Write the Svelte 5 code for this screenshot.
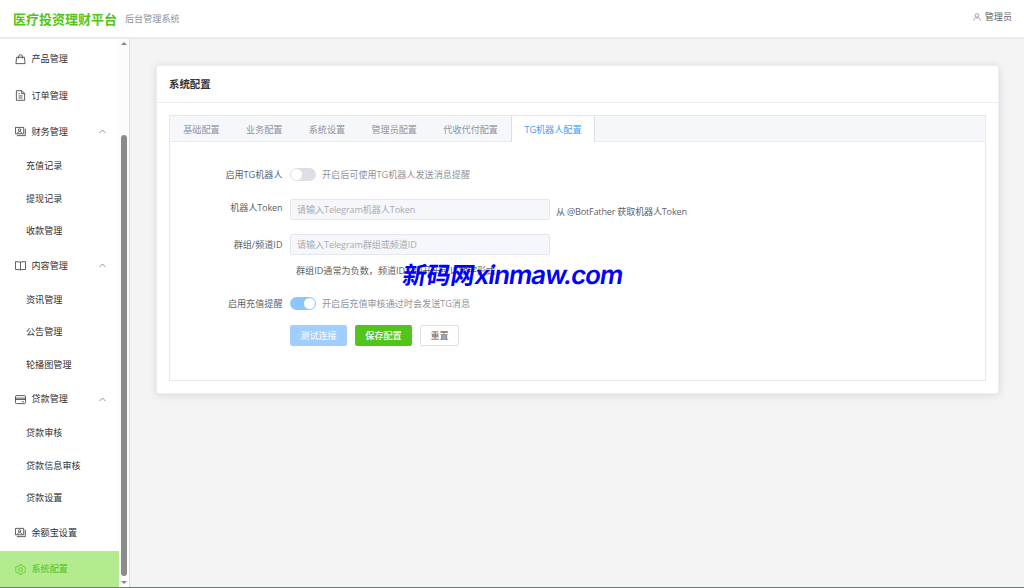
<script>
  let activeTab = $state('TG机器人配置');
  let chatToken = $state('');
  let chatId = $state('');
  let botEnabled = $state(false);
  let rechargeNotice = $state(true);

  const tabs = ['基础配置', '业务配置', '系统设置', '管理员配置', '代收代付配置', 'TG机器人配置'];

  const menu = [
    { label: '产品管理', icon: 'goods' },
    { label: '订单管理', icon: 'document' },
    { label: '财务管理', icon: 'money', children: ['充值记录', '提现记录', '收款管理'] },
    { label: '内容管理', icon: 'reading', children: ['资讯管理', '公告管理', '轮播图管理'] },
    { label: '贷款管理', icon: 'card', children: ['贷款审核', '贷款信息审核', '贷款设置'] },
    { label: '余额宝设置', icon: 'money' },
    { label: '系统配置', icon: 'setting', active: true }
  ];
</script>

{#snippet icon(name)}
  <svg class="icon" viewBox="0 0 24 24">
    {#if name === 'goods'}
      <path d="M3.500 7h17l1.500 14H2zM8 10V5.500a4 4 0 0 1 8 0V10" />
    {:else if name === 'document'}
      <path d="M3 1.500h12l6 6v15H3zM14.500 2v6H21M7.500 8h3M7.500 13h9M7.500 17.500h9" />
    {:else if name === 'money'}
      <path d="M1 3h18v14H1zM22.500 6v15H4" />
      <circle cx="10" cy="8.500" r="2.600" />
      <path d="M5 16c1-5 9-5 10 0" />
    {:else if name === 'reading'}
      <path d="M1 3.500l11 1 11-1v17L12 21.500 1 20.500zM12 4.500v17" />
    {:else if name === 'card'}
      <rect x="1" y="3.500" width="22" height="17.500" rx="2.500" />
      <path d="M1 9h22M1 12h22M15 17h4.500" />
    {:else if name === 'setting'}
      <path d="M9.500 1.500h5l1 3 2.500 1.300 3-.7 2.300 4.300-2 2.600 2 2.600-2.300 4.300-3-.7-2.500 1.300-1 3h-5l-1-3L6 18.200l-3 .7-2.300-4.300 2-2.600-2-2.600L3 5.100l3 .7 2.500-1.300z" />
      <circle cx="12" cy="12" r="4" />
    {:else if name === 'user'}
      <circle cx="12" cy="7.500" r="5.500" />
      <path d="M2 23c0-6 4-8.500 8-8.500h4c4 0 8 2.500 8 8.500" />
    {/if}
  </svg>
{/snippet}

<div class="layout">
  <header class="header">
    <h1>医疗投资理财平台</h1>
    <span class="subtitle">后台管理系统</span>
    <div class="user">
      {@render icon('user')}
      <span>管理员</span>
    </div>
  </header>

  <div class="body">
    <aside class="sidebar">
      <nav class="menu">
        {#each menu as item}
          <div class="menu-item" class:active={item.active}>
            {@render icon(item.icon)}
            <span>{item.label}</span>
            {#if item.children}
              <svg class="arrow" viewBox="0 0 12 12"><path d="M1 8.500l5-5 5 5" /></svg>
            {/if}
          </div>
          {#each item.children ?? [] as child}
            <div class="sub-item">{child}</div>
          {/each}
        {/each}
      </nav>
      <div class="scrollbar">
        <span class="scroll-up"></span>
        <span class="thumb"></span>
        <span class="scroll-down"></span>
      </div>
    </aside>

    <main>
      <section class="card">
        <div class="card-header">系统配置</div>
        <div class="card-body">
          <div class="tabs">
            <div class="tab-bar">
              {#each tabs as tab}
                <button class="tab" class:active={tab === activeTab} onclick={() => (activeTab = tab)}>{tab}</button>
              {/each}
            </div>

            <div class="form">
              <div class="row switch-row">
                <span class="label">启用TG机器人</span>
                <button class="switch" class:on={botEnabled} aria-label="启用TG机器人" onclick={() => (botEnabled = !botEnabled)}></button>
                <span class="hint">开启后可使用TG机器人发送消息提醒</span>
              </div>
              <div class="row token-row">
                <span class="label raised">机器人Token</span>
                <input placeholder="请输入Telegram机器人Token" bind:value={chatToken} />
                <span class="help">从 @BotFather 获取机器人Token</span>
              </div>
              <div class="row chat-row">
                <span class="label">群组/频道ID</span>
                <input placeholder="请输入Telegram群组或频道ID" bind:value={chatId} />
              </div>
              <div class="row tip-row">群组ID通常为负数，频道ID以@开头或以数字形式</div>
              <div class="row notice-row">
                <span class="label">启用充值提醒</span>
                <button class="switch" class:on={rechargeNotice} aria-label="启用充值提醒" onclick={() => (rechargeNotice = !rechargeNotice)}></button>
                <span class="hint">开启后充值审核通过时会发送TG消息</span>
              </div>
              <div class="row actions">
                <button class="btn test">测试连接</button>
                <button class="btn save">保存配置</button>
                <button class="btn reset">重置</button>
              </div>
            </div>
          </div>
        </div>
      </section>
    </main>
  </div>

  <div class="watermark"><span class="cn">新码网</span><span class="en">xinmaw.com</span></div>
</div>

<style>
  :global(body) {
    overflow: hidden;
  }

  .layout {
    position: relative;
    display: flex;
    flex-direction: column;
    box-sizing: border-box;
    height: 588px;
    border-bottom: 1px solid #747b74;
    background: #f4f4f4;
    color: #303133;
    font-family: "Open Sans", "Noto Sans CJK SC", sans-serif;
    font-size: 9.1px;
    line-height: 14px;
  }

  .layout * {
    box-sizing: border-box;
  }

  button,
  input {
    font: inherit;
  }

  .header {
    display: flex;
    align-items: center;
    flex: none;
    height: 39px;
    padding: 0 12px 0 13px;
    border-bottom: 2px solid #ebebeb;
    background: #fff;
  }

  h1 {
    margin: 0;
    color: #52c41a;
    font-size: 13px;
    line-height: 18px;
    font-weight: 700;
  }

  .subtitle {
    margin-left: 8px;
    color: #909399;
  }

  .user {
    display: flex;
    align-items: center;
    gap: 4px;
    margin-left: auto;
    padding-bottom: 4px;
    color: #606266;
  }

  .icon {
    flex: none;
    width: 11px;
    height: 11px;
    fill: none;
    stroke: currentColor;
    stroke-width: 1.7;
  }

  .user .icon {
    width: 8px;
    height: 8px;
  }

  .body {
    display: flex;
    flex: 1;
    min-height: 0;
  }

  .sidebar {
    display: flex;
    flex: none;
    width: 130px;
    border-right: 1px solid #dedede;
    background: #fff;
  }

  .menu {
    width: 119px;
    padding-top: 2px;
    overflow: hidden;
  }

  .menu-item {
    display: flex;
    align-items: center;
    gap: 5.500px;
    height: 36.4px;
    padding: 0 13px 0 15px;
  }

  .menu-item.active {
    background: #b5eb8f;
    color: #52c41a;
  }

  .arrow {
    width: 7px;
    height: 7px;
    margin-left: auto;
    fill: none;
    stroke: #606266;
    stroke-width: 1.2;
  }

  .sub-item {
    height: 32.4px;
    padding-left: 26px;
    line-height: 32.4px;
  }

  .scrollbar {
    display: flex;
    flex-direction: column;
    align-items: center;
    width: 10px;
    padding: 3px 0;
    background: #fcfcfc;
  }

  .scroll-up,
  .scroll-down {
    border: 3px solid transparent;
  }

  .scroll-up {
    border-top: 0;
    border-bottom: 3.5px solid #858585;
  }

  .scroll-down {
    margin-top: 5px;
    border-bottom: 0;
    border-top: 3.5px solid #858585;
  }

  .thumb {
    flex: 1;
    width: 6px;
    margin-top: 90px;
    border-radius: 3px;
    background: #8b8b8b;
  }

  main {
    flex: 1;
    padding: 26px 25px 0 26px;
  }

  .card {
    height: 329px;
    border: 1px solid #ebeef5;
    border-radius: 3px;
    background: #fff;
    box-shadow: 0 1px 8px rgba(0, 0, 0, 0.12);
  }

  .card-header {
    height: 37px;
    padding-left: 12px;
    border-bottom: 1px solid #ebeef5;
    font-size: 10.4px;
    font-weight: 600;
    line-height: 36px;
  }

  .card-body {
    padding: 12px;
  }

  .tabs {
    height: 266px;
    border: 1px solid #e6e8ed;
  }

  .tab-bar {
    display: flex;
    height: 26px;
    border-bottom: 1px solid #e9ebf0;
    background: #f5f7fa;
  }

  .tab {
    flex: none;
    height: 26px;
    padding: 0 13.2px;
    border: 0;
    background: none;
    color: #909399;
    line-height: 27px;
  }

  .tab.active {
    padding: 0 12.3px;
    border-left: 1px solid #dcdfe6;
    border-right: 1px solid #dcdfe6;
    background: #fff;
    color: #409eff;
  }

  .form {
    padding-top: 22px;
    color: #606266;
  }

  .row {
    display: flex;
    align-items: center;
    height: 21px;
  }

  .label {
    width: 112.5px;
    margin-right: 7.5px;
    text-align: right;
  }

  .label.raised {
    padding-bottom: 4px;
    letter-spacing: -0.12px;
  }

  .token-row,
  .chat-row {
    margin-top: 14px;
  }

  .tip-row {
    margin-top: 5px;
    padding-left: 126px;
  }

  .notice-row {
    margin-top: 12px;
  }

  .actions {
    gap: 8px;
    margin-top: 11px;
    padding-left: 120px;
  }

  .switch {
    flex: none;
    width: 26px;
    height: 13px;
    padding: 0 1px;
    border: 0;
    border-radius: 7px;
    background: #dcdfe6;
    text-align: left;
    line-height: 0;
  }

  .switch::before {
    content: "";
    display: inline-block;
    width: 11px;
    height: 11px;
    border-radius: 50%;
    background: #fff;
  }

  .switch.on {
    background: #8cc5ff;
    text-align: right;
  }

  .hint {
    margin-left: 6px;
    color: #909399;
  }

  .help {
    margin-left: 6px;
    padding-top: 5px;
    letter-spacing: -0.2px;
  }

  input {
    width: 260px;
    height: 21px;
    padding: 0 6px;
    border: 1px solid #e4e7ed;
    border-radius: 2px;
    outline: 0;
    background: #f5f7fa;
    color: #606266;
    letter-spacing: -0.18px;
  }

  .token-row input,
  .chat-row input {
    letter-spacing: -0.1px;
  }

  input::placeholder {
    color: #a8abb2;
  }

  .btn {
    height: 21px;
    padding: 0;
    border: 0;
    border-radius: 2px;
    color: #fff;
  }

  .test {
    width: 57px;
    background: #a0cfff;
  }

  .save {
    width: 57px;
    background: #52c41a;
    font-weight: 500;
  }

  .reset {
    width: 39px;
    border: 1px solid #dcdfe6;
    background: #fff;
    color: #606266;
  }

  /* site mark laid over the form */
  .watermark {
    position: absolute;
    top: 258px;
    left: 403px;
    display: flex;
    align-items: center;
    height: 34px;
    color: #0000fb;
    font-weight: 700;
    white-space: nowrap;
    pointer-events: none;
    transform: skewX(-9deg);
  }

  .cn {
    font-size: 24px;
  }

  .en {
    font-family: Inter, sans-serif;
    font-size: 26px;
    font-weight: 600;
    letter-spacing: -1.1px;
  }
</style>
